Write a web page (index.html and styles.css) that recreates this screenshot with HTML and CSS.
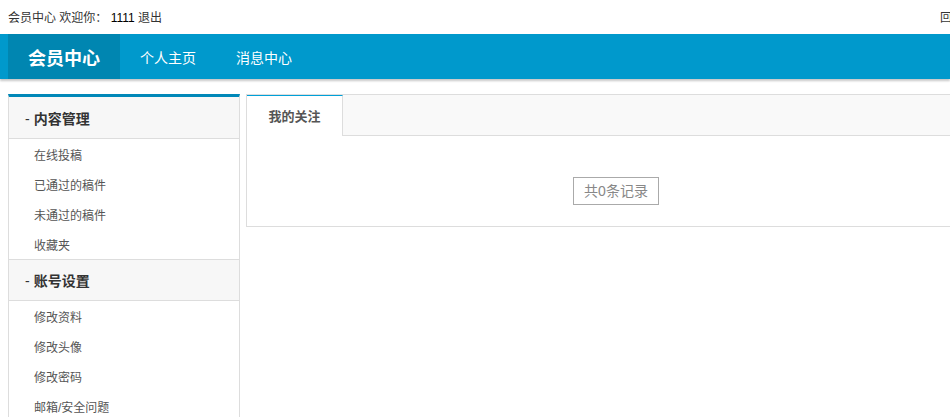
FILE: index.html
```html
<!DOCTYPE html>
<html lang="zh-CN">
<head>
<meta charset="utf-8">
<title>会员中心</title>
<link rel="stylesheet" href="styles.css">
</head>
<body>
<div class="topbar">
  <div class="wrap topbar-inner">
    <div class="welcome">会员中心 欢迎你： <span class="uname">1111</span> <a href="#">退出</a></div>
    <div class="home"><a href="#">回到首页</a></div>
  </div>
</div>
<div class="header">
  <div class="wrap header-inner">
    <div class="logo">会员中心</div>
    <a class="nav-item" href="#">个人主页</a>
    <a class="nav-item" href="#">消息中心</a>
  </div>
</div>
<div class="wrap main">
  <div class="sidebar">
    <div class="sec-title sec-first"><span class="dash">-</span>内容管理</div>
    <ul class="sec-list">
      <li>在线投稿</li>
      <li>已通过的稿件</li>
      <li>未通过的稿件</li>
      <li>收藏夹</li>
    </ul>
    <div class="sec-title sec-next"><span class="dash">-</span>账号设置</div>
    <ul class="sec-list">
      <li>修改资料</li>
      <li>修改头像</li>
      <li>修改密码</li>
      <li>邮箱/安全问题</li>
    </ul>
  </div>
  <div class="panel">
    <div class="tabs">
      <div class="tab active">我的关注</div>
      <div class="tab-fill"></div>
    </div>
    <div class="panel-body">
      <span class="count">共0条记录</span>
    </div>
  </div>
</div>
</body>
</html>
```
FILE: styles.css
```css
html, body {
  margin: 0;
  padding: 0;
  overflow-x: hidden;
}
body {
  font-family: "Liberation Sans", "Noto Sans CJK SC", sans-serif;
  font-size: 12px;
  color: #333;
  background: #fff;
}
a {
  color: inherit;
  text-decoration: none;
}
ul {
  margin: 0;
  padding: 0;
  list-style: none;
}
.wrap {
  width: 980px;
  margin-left: 8px;
}
.topbar {
  height: 34px;
}
.topbar-inner {
  display: flex;
  justify-content: space-between;
  align-items: center;
  height: 33px;
}
.uname {
  color: #000;
}
.header {
  height: 45px;
  background: #0099cc;
  box-shadow: 0 2px 2px rgba(0, 0, 0, 0.22);
}
.header-inner {
  display: flex;
  height: 45px;
  align-items: stretch;
}
.logo {
  background: #0086b1;
  color: #fff;
  font-size: 18px;
  font-weight: bold;
  padding: 0 20px;
  display: flex;
  align-items: center;
}
.nav-item {
  color: #fff;
  font-size: 14px;
  padding: 0 20px;
  display: flex;
  align-items: center;
}
.main {
  display: flex;
  align-items: flex-start;
  gap: 6px;
  margin-top: 15px;
}
.sidebar {
  width: 230px;
  border-top: 3px solid #0088b8;
  border-left: 1px solid #ddd;
  border-right: 1px solid #ddd;
  flex: none;
}
.sec-title {
  height: 40px;
  line-height: 43px;
  background: #f7f7f7;
  border-bottom: 1px solid #ddd;
  font-size: 14px;
  font-weight: bold;
  color: #333;
  padding-left: 16px;
}
.sec-first {
  height: 41px;
  line-height: 44px;
}
.sec-next {
  border-top: 1px solid #ddd;
}
.dash {
  font-weight: normal;
  margin-right: 4px;
}
.sec-list li {
  height: 30px;
  line-height: 34px;
  padding-left: 25px;
  color: #555;
  font-size: 12px;
}
.panel {
  width: 738px;
  border: 1px solid #ddd;
  flex: none;
}
.tabs {
  display: flex;
  height: 41px;
  background: #f9f9f9;
}
.tab {
  width: 96px;
  text-align: center;
  line-height: 42px;
  font-size: 13px;
  font-weight: bold;
  color: #555;
  border-top: 1px solid #00a0d8;
  border-right: 1px solid #ddd;
  background: #fff;
  box-sizing: border-box;
}
.tab-fill {
  flex: 1;
  border-bottom: 1px solid #ddd;
}
.panel-body {
  padding: 41px 0 21px;
  text-align: center;
}
.count {
  display: inline-block;
  height: 26px;
  line-height: 27px;
  padding: 0 10px;
  border: 1px solid #aaa;
  color: #888;
  font-size: 14px;
  vertical-align: top;
}
```
